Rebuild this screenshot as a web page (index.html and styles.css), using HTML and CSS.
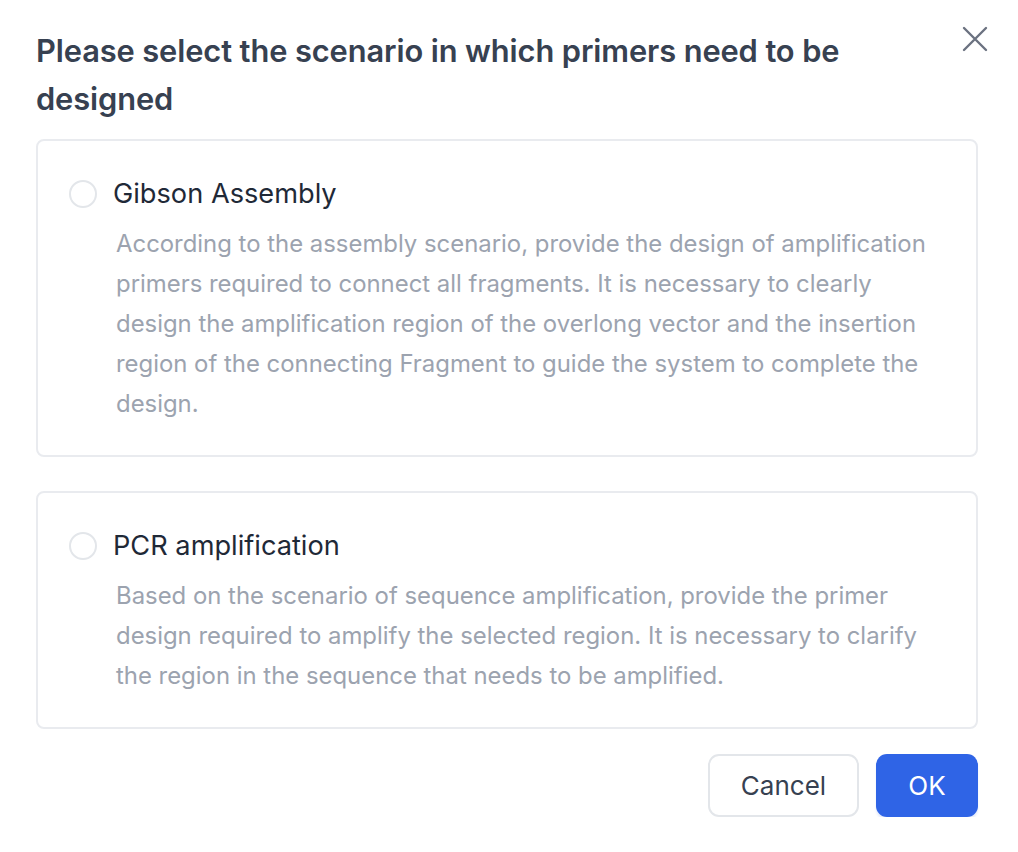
FILE: index.html
```html
<!DOCTYPE html>
<html lang="en">
<head>
<meta charset="utf-8">
<title>Select scenario</title>
<link rel="stylesheet" href="styles.css">
</head>
<body>
<div class="dialog">
  <div class="header">
    <h1 class="title">Please select the scenario in which primers need to be designed</h1>
    <button class="close" aria-label="Close">
      <svg width="26" height="26" viewBox="0 0 26 26"><path d="M2 2L24 24M24 2L2 24" stroke="#6b7280" stroke-width="2.4" stroke-linecap="round" fill="none"/></svg>
    </button>
  </div>
  <div class="options">
    <label class="card">
      <div class="card-head">
        <span class="radio"></span>
        <span class="card-title">Gibson Assembly</span>
      </div>
      <p class="card-desc">According to the assembly scenario, provide the design of amplification primers required to connect all fragments. It is necessary to clearly design the amplification region of the overlong vector and the insertion region of the connecting Fragment to guide the system to complete the design.</p>
    </label>
    <label class="card">
      <div class="card-head">
        <span class="radio"></span>
        <span class="card-title">PCR amplification</span>
      </div>
      <p class="card-desc">Based on the scenario of sequence amplification, provide the primer design required to amplify the selected region. It is necessary to clarify the region in the sequence that needs to be amplified.</p>
    </label>
  </div>
  <div class="footer">
    <button class="btn btn-cancel">Cancel</button>
    <button class="btn btn-ok">OK</button>
  </div>
</div>
</body>
</html>
```
FILE: styles.css
```css
* { box-sizing: border-box; }
html, body { margin: 0; padding: 0; background: #ffffff; }
body { font-family: Inter, "Noto Sans", "Liberation Sans", sans-serif; color: #374151; }
.dialog { width: 1018px; padding: 27px 40px 0 36px; }
.header { display: flex; align-items: flex-start; justify-content: space-between; }
.title { margin: 0; font-size: 30.8px; line-height: 48px; font-weight: 600; color: #374151; width: 880px; letter-spacing: -0.1px; }
.close { background: none; border: 0; padding: 0; margin: -1px -10px 0 0; width: 26px; height: 26px; cursor: pointer; }
.close svg { display: block; }
.options { display: flex; flex-direction: column; gap: 34px; margin-top: 16px; }
.card { display: block; border: 2px solid #e9ebef; border-radius: 8px; padding: 33px 32px 31px 31px; }
.card-head { display: flex; align-items: center; height: 40px; }
.radio { width: 28px; height: 28px; border-radius: 50%; border: 2px solid #e3e6ea; margin-right: 16px; flex: none; }
.card-title { font-size: 27.2px; line-height: 40px; color: #1f2937; font-weight: 400; }
.card-desc { margin: 10px 0 0 47px; font-size: 23.9px; line-height: 40px; color: #9ca3af; }
.footer { display: flex; justify-content: flex-end; gap: 17px; margin-top: 25px; }
.btn { height: 63px; border-radius: 11px; font-family: inherit; font-size: 26px; padding: 0; cursor: pointer; }
.btn-cancel { width: 151px; background: #ffffff; border: 2px solid #e3e6ea; color: #374151; }
.btn-ok { width: 102px; background: #2f64e6; border: 0; color: #ffffff; box-shadow: 0 3px 2px rgba(47,100,230,0.12); }
```
